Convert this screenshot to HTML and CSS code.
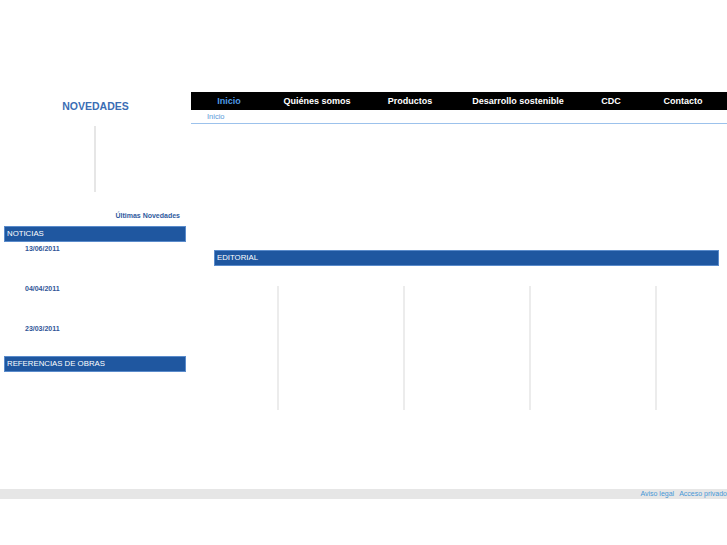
FILE: index.html
```html
<!DOCTYPE html>
<html lang="es">
<head>
<meta charset="utf-8">
<title>Inicio</title>
<link rel="stylesheet" href="styles.css">
</head>
<body>
<div class="page">
  <aside class="side">
    <h2 class="side-title">NOVEDADES</h2>
    <div class="side-rule"></div>
    <div class="side-more">Últimas Novedades</div>
    <div class="bar">NOTICIAS</div>
    <ul class="dates">
      <li>13/06/2011</li>
      <li>04/04/2011</li>
      <li>23/03/2011</li>
    </ul>
    <div class="bar">REFERENCIAS DE OBRAS</div>
  </aside>
  <main class="main">
    <nav class="nav">
      <a class="nav-item active">Inicio</a>
      <a class="nav-item">Quiénes somos</a>
      <a class="nav-item">Productos</a>
      <a class="nav-item">Desarrollo sostenible</a>
      <a class="nav-item">CDC</a>
      <a class="nav-item">Contacto</a>
    </nav>
    <div class="crumb">Inicio</div>
    <div class="bar editorial">EDITORIAL</div>
    <div class="cols">
      <div class="col"></div>
      <div class="col"></div>
      <div class="col"></div>
      <div class="col"></div>
    </div>
  </main>
</div>
<footer class="footer">
  <a>Aviso legal</a>
  <a>Acceso privado</a>
</footer>
</body>
</html>
```
FILE: styles.css
```css
html, body {
  margin: 0;
  padding: 0;
  background: #ffffff;
}
body {
  font-family: "Liberation Sans", Arial, sans-serif;
  width: 727px;
  overflow: hidden;
}
.page {
  display: flex;
  padding-top: 92px;
  height: 318px;
}
.side {
  width: 191px;
  flex: none;
}
.side-title {
  margin: 0;
  height: 28px;
  line-height: 28px;
  text-align: center;
  font-size: 10.5px;
  font-weight: bold;
  color: #3a6db4;
}
.side-rule {
  width: 2px;
  height: 66px;
  margin: 6px 0 0 94px;
  background: #e6e6e6;
}
.side-more {
  margin-top: 19px;
  padding-right: 11px;
  text-align: right;
  font-size: 7px;
  font-weight: bold;
  line-height: 10px;
  color: #2f5a9e;
}
.bar {
  box-sizing: border-box;
  height: 16px;
  line-height: 14px;
  background: #1f57a0;
  border: 1px solid #5a8bcb;
  color: #ffffff;
  font-size: 7.8px;
  padding-left: 2px;
}
.side .bar {
  margin-left: 4px;
  width: 182px;
}
.side-more + .bar {
  margin-top: 5px;
}
.dates {
  list-style: none;
  margin: 2px 0 0;
  padding: 0;
}
.dates li {
  padding-left: 25px;
  height: 10px;
  line-height: 10px;
  padding-bottom: 30px;
  font-size: 7px;
  font-weight: bold;
  color: #2f5597;
}
.dates li:last-child {
  padding-bottom: 22px;
}
.main {
  width: 536px;
  min-width: 0;
  flex: none;
}
.nav {
  display: grid;
  grid-template-columns: 76px 100px 86px 130px 56px 88px;
  height: 18px;
  background: #000000;
}
.nav-item {
  text-align: center;
  line-height: 18px;
  font-size: 9px;
  font-weight: bold;
  color: #ffffff;
  white-space: nowrap;
}
.nav-item.active {
  color: #4f9be6;
}
.crumb {
  height: 13px;
  line-height: 13px;
  padding-left: 16px;
  font-size: 7.5px;
  color: #5a9ad8;
  border-bottom: 1px solid #9cc2ec;
}
.editorial {
  margin: 126px 8px 0 23px;
}
.cols {
  display: flex;
  margin: 20px 0 0 86px;
}
.col {
  flex: none;
  width: 126px;
  height: 124px;
  border-left: 2px solid #ececec;
  box-sizing: border-box;
}
.col:last-child {
  width: 64px;
}
.footer {
  margin-top: 79px;
  height: 10px;
  background: #e6e6e6;
  display: flex;
  justify-content: flex-end;
  gap: 5px;
  font-size: 7px;
  line-height: 10px;
}
.footer a {
  color: #4797d6;
}
```
